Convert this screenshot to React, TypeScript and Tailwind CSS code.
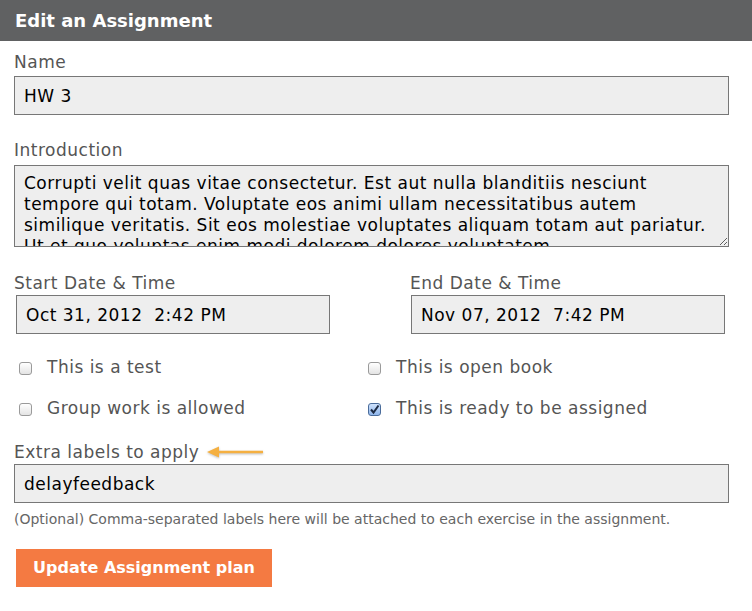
import React from 'react';

const font = { fontFamily: '"DejaVu Sans", Verdana, sans-serif' };

const Box: React.FC<{ checked?: boolean }> = ({ checked }) => (
  <span
    className={`inline-flex h-[13px] w-[13px] items-center justify-center rounded-[3px] border ${
      checked
        ? 'border-[#4a6c9b] bg-gradient-to-b from-[#cfe2fb] to-[#8fb6ec]'
        : 'border-[#9a9a9a] bg-gradient-to-b from-white to-[#e4e4e4]'
    }`}
  >
    {checked && (
      <svg width="11" height="11" viewBox="0 0 11 11">
        <path d="M2 5.5 L4.5 8.5 L9.5 1.5" fill="none" stroke="#1d2b44" strokeWidth="2" />
      </svg>
    )}
  </span>
);

const Check: React.FC<{ label: string; checked?: boolean }> = ({ label, checked }) => (
  <label className="flex h-[20px] items-center gap-[15px] text-[17px] tracking-[0.5px] text-[#555]">
    <Box checked={checked} />
    {label}
  </label>
);

const field =
  'h-[39px] border border-[#777] bg-[#eee] px-[9px] text-[17px] tracking-[0.5px] text-black outline-none';
const label = 'text-[17px] leading-[20px] tracking-[0.5px] text-[#555]';

export default function App() {
  const intro =
    'Corrupti velit quas vitae consectetur. Est aut nulla blanditiis nesciunt tempore qui totam. Voluptate eos animi ullam necessitatibus autem similique veritatis. Sit eos molestiae voluptates aliquam totam aut pariatur. Ut et quo voluptas enim modi dolorem dolores voluptatem.';

  return (
    <div className="h-[611px] w-[752px] bg-white" style={font}>
      <div className="flex h-[41px] items-center bg-[#606162] px-[15px]">
        <h1 className="text-[18px] font-bold text-white">Edit an Assignment</h1>
      </div>

      <div className="pl-[14px] pr-[23px]">
        <div className={`pt-[11px] ${label}`}>Name</div>
        <input readOnly value="HW 3" className={`mt-[4px] w-full ${field}`} />

        <div className={`pt-[25px] ${label}`}>Introduction</div>
        <textarea
          readOnly
          value={intro}
          className="mt-[5px] block h-[82px] w-full resize-y overflow-hidden border border-[#777] bg-[#eee] px-[9px] py-[7px] text-[17px] leading-[21px] tracking-[0.5px] text-black outline-none"
        />

        <div className="mt-[26px] grid grid-cols-[396px_1fr]">
          <div>
            <div className={label}>Start Date &amp; Time</div>
            <input
              readOnly
              value="Oct 31, 2012  2:42 PM"
              className={`ml-[2px] mt-[2px] w-[314px] ${field}`}
            />
          </div>
          <div>
            <div className={label}>End Date &amp; Time</div>
            <input
              readOnly
              value="Nov 07, 2012  7:42 PM"
              className={`ml-[1px] mt-[2px] w-[314px] ${field}`}
            />
          </div>
        </div>

        <div className="mt-[24px] grid grid-cols-[349px_1fr] gap-y-[21px] pl-[5px]">
          <Check label="This is a test" />
          <Check label="This is open book" />
          <Check label="Group work is allowed" />
          <Check label="This is ready to be assigned" checked />
        </div>

        <div className="mt-[23px] flex items-center gap-[8px]">
          <span className={label}>Extra labels to apply</span>
          <svg width="58" height="12" viewBox="0 0 58 12" className="drop-shadow-[0_1px_1px_rgba(0,0,0,0.25)]">
            <path d="M10 6 H56" stroke="#f5b041" strokeWidth="2.5" />
            <path d="M0 6 L12 0.5 L12 11.5 Z" fill="#f5b041" />
          </svg>
        </div>
        <input readOnly value="delayfeedback" className={`mt-[2px] w-full ${field}`} />
        <div className="mt-[8px] text-[14px] leading-[17px] text-[#666]">
          (Optional) Comma-separated labels here will be attached to each exercise in the assignment.
        </div>

        <button className="ml-[2px] mt-[21px] h-[38px] w-[256px] bg-[#f47a42] text-[16px] font-bold text-white">
          Update Assignment plan
        </button>
      </div>
    </div>
  );
}
